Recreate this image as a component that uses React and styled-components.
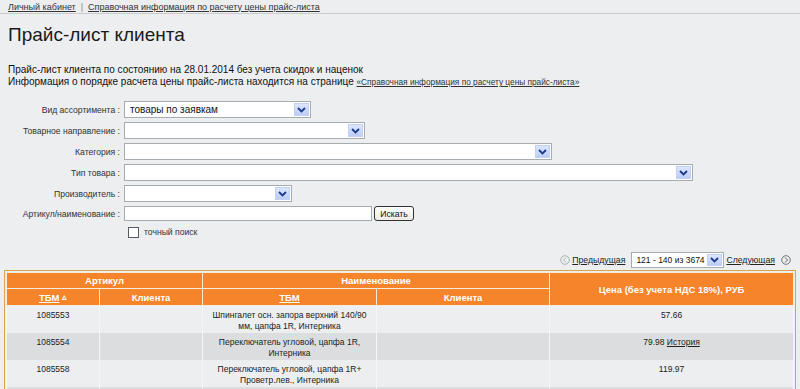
import React from 'react'
import styled, { createGlobalStyle } from 'styled-components'

const GlobalStyle = createGlobalStyle`
  html, body {
    margin: 0;
    padding: 0;
    background: #eceef0;
  }
  body {
    font-family: "Liberation Sans", Arial, sans-serif;
    color: #222;
  }
`

const rows = [
  { tbm: '1085553', name: 'Шпингалет осн. запора верхний 140/90 мм, цапфа 1R, Интерника', price: '57.66' },
  { tbm: '1085554', name: 'Переключатель угловой, цапфа 1R, Интерника', price: '79.98', history: true },
  { tbm: '1085558', name: 'Переключатель угловой, цапфа 1R+ Проветр.лев., Интерника', price: '119.97' },
  { tbm: '', name: '', price: '' },
]

const fields = [
  { label: 'Вид ассортимента :', width: 187, value: 'товары по заявкам' },
  { label: 'Товарное направление :', width: 241 },
  { label: 'Категория :', width: 428 },
  { label: 'Тип товара :', width: 569 },
  { label: 'Производитель :', width: 168 },
]

function Chevron() {
  return (
    <svg width="9" height="6" viewBox="0 0 9 6">
      <path d="M1 1 L4.5 4.5 L8 1" fill="none" stroke="#1d3a8a" strokeWidth="1.8" />
    </svg>
  )
}

function Select({ width, value, small }) {
  return (
    <StSelect width={width} small={small}>
      <StSelectValue small={small}>{value}</StSelectValue>
      <StSelectBtn>
        <Chevron />
      </StSelectBtn>
    </StSelect>
  )
}

function RoundArrow({ dir }) {
  const d = dir === 'left' ? 'M6 2.5 L3.5 5 L6 7.5' : 'M4 2.5 L6.5 5 L4 7.5'
  return (
    <svg width="10" height="10" viewBox="0 0 10 10">
      <circle cx="5" cy="5" r="4.3" fill="none" stroke={dir === 'left' ? '#aaa' : '#666'} strokeWidth="0.9" />
      <path d={d} fill="none" stroke={dir === 'left' ? '#aaa' : '#555'} strokeWidth="0.9" />
    </svg>
  )
}

export default function App() {
  return (
    <>
      <GlobalStyle />
      <StPage>
        <StNav>
          <StNavLink>Личный кабинет</StNavLink>
          <StNavSep>|</StNavSep>
          <StNavLink>Справочная информация по расчету цены прайс-листа</StNavLink>
        </StNav>

        <StTitle>Прайс-лист клиента</StTitle>

        <StIntro>
          <div>Прайс-лист клиента по состоянию на 28.01.2014 без учета скидок и наценок</div>
          <div>
            Информация о порядке расчета цены прайс-листа находится на странице{' '}
            <StSmallLink>«Справочная информация по расчету цены прайс-листа»</StSmallLink>
          </div>
        </StIntro>

        <StForm>
          {fields.map((f) => (
            <React.Fragment key={f.label}>
              <StLabel>{f.label}</StLabel>
              <StField>
                <Select width={f.width} value={f.value} />
              </StField>
            </React.Fragment>
          ))}
          <StLabel>Артикул/наименование :</StLabel>
          <StField>
            <StInput />
            <StButton>Искать</StButton>
          </StField>
          <span />
          <StCheckRow>
            <StCheckbox />
            <span>точный поиск</span>
          </StCheckRow>
        </StForm>

        <StPager>
          <RoundArrow dir="left" />
          <StPagerLink>Предыдущая</StPagerLink>
          <Select width={93} value="121 - 140 из 3674" small />
          <StPagerLink>Следующая</StPagerLink>
          <RoundArrow dir="right" />
        </StPager>

        <StTableFrame>
          <StTable>
            <colgroup>
              <col style={{ width: 93 }} />
              <col style={{ width: 103 }} />
              <col style={{ width: 174 }} />
              <col style={{ width: 173 }} />
              <col />
            </colgroup>
            <thead>
              <tr>
                <StTh colSpan={2} h={15}>Артикул</StTh>
                <StTh colSpan={2} h={15}>Наименование</StTh>
                <StTh rowSpan={2}>Цена (без учета НДС 18%), РУБ</StTh>
              </tr>
              <tr>
                <StTh h={16}>
                  <StThLink>ТБМ</StThLink> <StSort>▵</StSort>
                </StTh>
                <StTh h={16}>Клиента</StTh>
                <StTh h={16}>
                  <StThLink>ТБМ</StThLink>
                </StTh>
                <StTh h={16}>Клиента</StTh>
              </tr>
            </thead>
            <tbody>
              {rows.map((r, i) => (
                <StTr key={i} odd={i % 2 === 1}>
                  <StTd>{r.tbm}</StTd>
                  <StTd />
                  <StTd wide>{r.name}</StTd>
                  <StTd />
                  <StTd>
                    {r.price}
                    {r.history && (
                      <>
                        {' '}
                        <StHistory>История</StHistory>
                      </>
                    )}
                  </StTd>
                </StTr>
              ))}
            </tbody>
          </StTable>
        </StTableFrame>
      </StPage>
    </>
  )
}

const StPage = styled.div`
  width: 800px;
  height: 389px;
  overflow: hidden;
`
const StNav = styled.div`
  display: flex;
  align-items: center;
  gap: 3px;
  height: 13px;
  padding: 0 8px;
  font-size: 9px;
  border-bottom: 1px solid #c9cbcd;
`
const StNavLink = styled.a`
  color: #333;
  text-decoration: underline;
`
const StNavSep = styled.span`
  color: #7a8a9a;
  padding: 0 2px;
`
const StTitle = styled.h1`
  margin: 9px 0 0 8px;
  font-weight: normal;
  font-size: 19px;
  line-height: 24px;
  color: #1a1a1a;
`
const StIntro = styled.div`
  margin: 17px 0 0 8px;
  font-size: 10px;
  line-height: 12px;
  color: #111;
`
const StSmallLink = styled.a`
  font-size: 8.3px;
  color: #333;
  text-decoration: underline;
`
const StForm = styled.div`
  display: grid;
  grid-template-columns: 120px 1fr;
  column-gap: 4px;
  row-gap: 4px;
  margin-top: 13px;
  font-size: 8.6px;
  color: #333;
`
const StLabel = styled.div`
  text-align: right;
  align-self: center;
`
const StField = styled.div`
  display: flex;
  align-items: center;
  gap: 2px;
`
const StSelect = styled.div`
  box-sizing: border-box;
  width: ${(p) => p.width}px;
  height: ${(p) => (p.small ? 16 : 17)}px;
  display: flex;
  align-items: center;
  justify-content: space-between;
  border: 1px solid #a5acb2;
  background: #fff;
  padding: 1px;
  flex-shrink: 0;
`
const StSelectValue = styled.span`
  padding-left: ${(p) => (p.small ? 3 : 4)}px;
  font-size: ${(p) => (p.small ? 8.5 : 10)}px;
  color: #111;
  white-space: nowrap;
  overflow: hidden;
`
const StSelectBtn = styled.span`
  box-sizing: border-box;
  flex-shrink: 0;
  width: 15px;
  height: 100%;
  display: flex;
  align-items: center;
  justify-content: center;
  background: linear-gradient(#dbe6fe, #bccdf8);
  border: 1px solid #c1d0f4;
`
const StInput = styled.div`
  box-sizing: border-box;
  width: 248px;
  height: 15px;
  border: 1px solid #a5acb2;
  background: #fff;
`
const StButton = styled.button`
  box-sizing: border-box;
  width: 40px;
  height: 15px;
  padding: 0;
  font-family: "Liberation Sans", Arial, sans-serif;
  font-size: 8.6px;
  color: #111;
  border: 1px solid #333;
  border-radius: 3px;
  background: linear-gradient(#fdfdfb, #ecebe4);
`
const StCheckRow = styled.div`
  display: flex;
  align-items: center;
  gap: 5px;
  padding-left: 4px;
  height: 14px;
`
const StCheckbox = styled.span`
  box-sizing: border-box;
  width: 11px;
  height: 11px;
  border: 1px solid #555c66;
  background: #fff;
`
const StPager = styled.div`
  display: flex;
  align-items: center;
  justify-content: flex-end;
  gap: 2px;
  height: 16px;
  margin: 13px 9px 2px 0;
  font-size: 8.7px;
`
const StPagerLink = styled.a`
  color: #222;
  text-decoration: underline;
  margin: 0 4px 0 0;
`
const StTableFrame = styled.div`
  margin: 0 4px;
  border: 1px solid #d6a54c;
  border-bottom: none;
  padding: 1px 1px 0;
`
const StTable = styled.table`
  width: 100%;
  table-layout: fixed;
  border-collapse: collapse;
  font-size: 8.5px;
`
const StTh = styled.th`
  height: ${(p) => (p.h ? `${p.h}px` : 'auto')};
  padding: 0;
  background: #f5842b;
  color: #fff;
  font-weight: bold;
  font-size: 9.5px;
  border: 1px solid #f4ebdc;
`
const StThLink = styled.span`
  text-decoration: underline;
`
const StSort = styled.span`
  font-size: 9px;
  vertical-align: top;
`
const StTr = styled.tr`
  background: ${(p) => (p.odd ? '#dcdddf' : '#eceef0')};
`
const StTd = styled.td`
  height: 27px;
  box-sizing: border-box;
  padding: 4px ${(p) => (p.wide ? 8 : 4)}px 1px;
  vertical-align: top;
  text-align: center;
  line-height: 11px;
  color: #222;
  border-left: 1px solid #f6f6f6;
  border-right: 1px solid #f6f6f6;
`
const StHistory = styled.a`
  text-decoration: underline;
  color: #222;
`
